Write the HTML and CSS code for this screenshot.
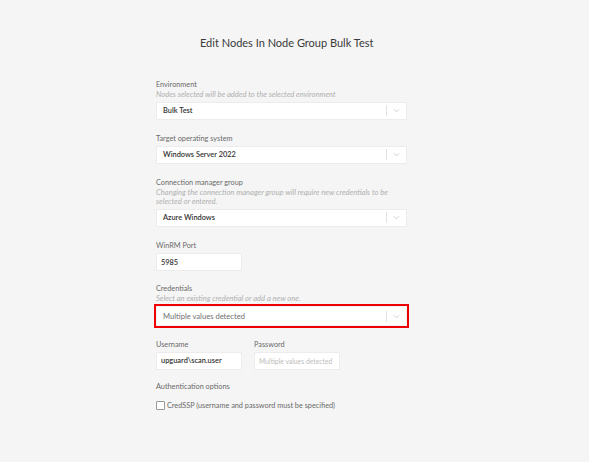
FILE: index.html
```html
<!DOCTYPE html>
<html>
<head>
<meta charset="utf-8">
<link rel="stylesheet" href="styles.css">
</head>
<body>
<div class="page">
  <h1 class="title">Edit Nodes In Node Group Bulk Test</h1>
  <form class="form">
    <div class="field">
      <div class="label">Environment</div>
      <div class="help">Nodes selected will be added to the selected environment</div>
      <div class="select"><span class="value">Bulk Test</span><span class="sep"></span><svg class="chev" viewBox="0 0 8 5"><path d="M1 1 L4 4 L7 1" fill="none" stroke="#c4c4c4" stroke-width="0.9"/></svg></div>
    </div>
    <div class="field">
      <div class="label">Target operating system</div>
      <div class="select"><span class="value">Windows Server 2022</span><span class="sep"></span><svg class="chev" viewBox="0 0 8 5"><path d="M1 1 L4 4 L7 1" fill="none" stroke="#c4c4c4" stroke-width="0.9"/></svg></div>
    </div>
    <div class="field">
      <div class="label">Connection manager group</div>
      <div class="help">Changing the connection manager group will require new credentials to be selected or entered.</div>
      <div class="select"><span class="value">Azure Windows</span><span class="sep"></span><svg class="chev" viewBox="0 0 8 5"><path d="M1 1 L4 4 L7 1" fill="none" stroke="#c4c4c4" stroke-width="0.9"/></svg></div>
    </div>
    <div class="field winrm">
      <div class="label">WinRM Port</div>
      <div class="input"><span class="value">5985</span></div>
    </div>
    <div class="field creds">
      <div class="label">Credentials</div>
      <div class="help">Select an existing credential or add a new one.</div>
      <div class="highlight">
        <div class="select tall"><span class="value muted">Multiple values detected</span><span class="sep"></span><svg class="chev" viewBox="0 0 8 5"><path d="M1 1 L4 4 L7 1" fill="none" stroke="#c4c4c4" stroke-width="0.9"/></svg></div>
      </div>
    </div>
    <div class="row">
      <div class="col">
        <div class="label">Username</div>
        <div class="input"><span class="value">upguard\scan.user</span></div>
      </div>
      <div class="col">
        <div class="label">Password</div>
        <div class="input"><span class="placeholder">Multiple values detected</span></div>
      </div>
    </div>
    <div class="field auth">
      <div class="label">Authentication options</div>
      <label class="check"><span class="box"></span><span class="check-text">CredSSP (username and password must be specified)</span></label>
    </div>
  </form>
</div>
</body>
</html>
```

FILE: styles.css
```css
html, body {
  margin: 0;
  padding: 0;
  background: #f5f5f5;
  font-family: Lato, "Open Sans", sans-serif;
}
.page {
  width: 589px;
  height: 462px;
  box-sizing: border-box;
  padding-top: 36px;
}
.title {
  margin: 0 0 0 200px;
  font-size: 11px;
  line-height: 14px;
  font-weight: 400;
  color: #3a3a3a;
  white-space: nowrap;
}
.form {
  margin: 29.5px 0 0 156px;
  width: 251px;
  display: flex;
  flex-direction: column;
}
.field, .col {
  display: flex;
  flex-direction: column;
}
.field {
  margin-top: 14px;
}
.field:first-child {
  margin-top: 0;
}
.field.winrm {
  margin-top: 14.5px;
}
.field.creds {
  margin-top: 12.5px;
}
.field.auth {
  margin-top: 12.7px;
}
.label {
  font-size: 7.3px;
  line-height: 9px;
  color: #6a6a6a;
  margin-bottom: 1.5px;
  white-space: nowrap;
}
.label + .select, .label + .input {
  margin-top: 1.5px;
}
.help {
  font-size: 7.6px;
  line-height: 8.7px;
  font-style: italic;
  color: #b0b0b0;
  margin-bottom: 3.2px;
}
.select {
  height: 18px;
  box-sizing: border-box;
  background: #fff;
  border: 1px solid #ececec;
  display: flex;
  align-items: center;
  padding-left: 6px;
}
.select.tall {
  height: 20px;
  border-color: #f2f2f2;
}
.value {
  flex: 1;
  font-size: 7.4px;
  color: #333;
  font-weight: 600;
  white-space: nowrap;
}
.value.muted {
  color: #707070;
  font-weight: 400;
  font-size: 7.6px;
}
.sep {
  width: 1px;
  height: 11px;
  background: #e2e2e2;
}
.chev {
  width: 7px;
  height: 5px;
  margin: 0 6px 0 6px;
}
.input {
  width: 86px;
  height: 18px;
  box-sizing: border-box;
  background: #fff;
  border: 1px solid #ececec;
  display: flex;
  align-items: center;
  padding-left: 4px;
}
.placeholder {
  font-size: 6.8px;
  color: #bdbdbd;
  white-space: nowrap;
}
.highlight {
  border: 2px solid #ee0000;
  margin: -2px -2px 0 -2px;
}
.row {
  display: flex;
  gap: 12px;
  margin-top: 11.3px;
}
.check {
  display: flex;
  align-items: center;
  margin-top: 8px;
  height: 10px;
}
.box {
  width: 9px;
  height: 9px;
  box-sizing: border-box;
  border: 1px solid #9a9a9a;
  background: #fff;
  border-radius: 1px;
  margin-right: 2px;
}
.check-text {
  font-size: 7.3px;
  color: #6a6a6a;
  white-space: nowrap;
}
```
